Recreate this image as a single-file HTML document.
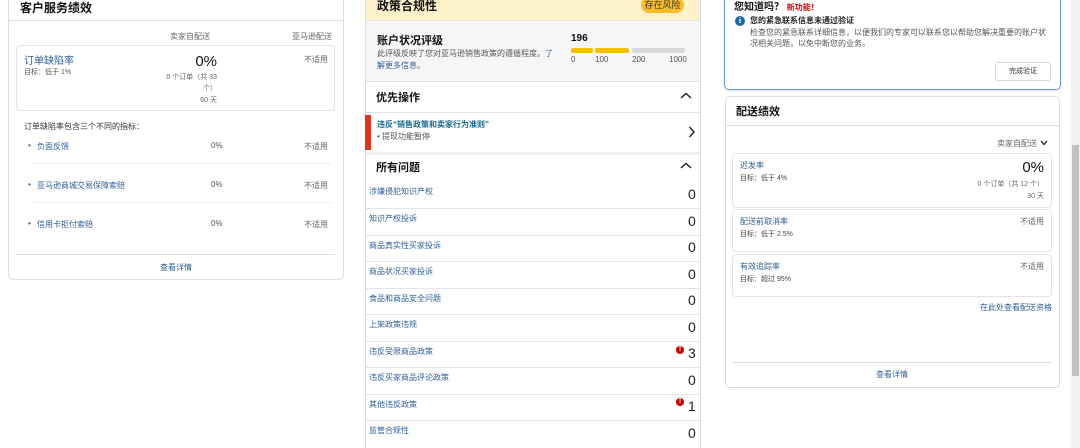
<!DOCTYPE html>
<html><head><meta charset="utf-8"><style>
*{margin:0;padding:0;box-sizing:border-box}
html,body{width:1080px;height:448px;overflow:hidden}
body{background:#fff;font-family:"Liberation Sans","Noto Sans CJK SC",sans-serif;color:#333;position:relative}
.a{position:absolute;white-space:nowrap}
.s{font-size:8px;color:#555}
.t{font-size:8px;color:#666}
.l{color:#2f5f97}
.h{font-size:12px;font-weight:bold;color:#111}
.r{text-align:right}
.box{position:absolute;border:1px solid #e3e3e3;border-radius:4px}
.ln{position:absolute;height:1px;background:#e3e3e3}
.num{font-size:14px;color:#222;line-height:16px}
.ex{position:absolute;width:8px;height:8px;border-radius:50%;background:#c40000;color:#fff;font-size:7px;font-weight:bold;text-align:center;line-height:8px}
</style></head><body>

<!-- left card -->
<div class="box" style="left:8px;top:-6px;width:336px;height:286px;border-radius:6px;border-color:#dcdcdc"></div>
<div class="ln" style="left:8px;top:20px;width:336px;background:#dde0e0"></div>
<div class="a h" style="left:20px;top:-1px;font-size:12px">客户服务绩效</div>
<div class="a t" style="left:170px;top:31px;width:47px" >卖家自配送</div>
<div class="a t" style="left:292px;top:31px">亚马逊配送</div>
<div class="box" style="left:16px;top:45px;width:319px;height:66px"></div>
<div class="a l" style="left:24px;top:52px;font-size:10px">订单缺陷率</div>
<div class="a s" style="left:24px;top:67px;font-size:7px">目标：低于 1%</div>
<div class="a" style="left:170px;top:53px;width:47px;font-size:15px;text-align:right;color:#111">0%</div>
<div class="a t r" style="left:140px;top:72px;width:77px;font-size:7px">0 个订单（共 33</div>
<div class="a t r" style="left:140px;top:83px;width:77px;font-size:7px">个）</div>
<div class="a t r" style="left:140px;top:95px;width:77px;font-size:7px">60 天</div>
<div class="a t" style="left:304px;top:54px">不适用</div>
<div class="a" style="left:24px;top:121px;font-size:8px;color:#333">订单缺陷率包含三个不同的指标：</div>
<div class="a s" style="left:28px;top:141px">•</div><div class="a s l" style="left:37px;top:141px">负面反馈</div><div class="a s" style="left:211px;top:141px">0%</div><div class="a t" style="left:304px;top:141px">不适用</div>
<div class="ln" style="left:34px;top:163px;width:297px;background:#eee"></div>
<div class="a s" style="left:28px;top:180px">•</div><div class="a s l" style="left:37px;top:180px">亚马逊商城交易保障索赔</div><div class="a s" style="left:211px;top:180px">0%</div><div class="a t" style="left:304px;top:180px">不适用</div>
<div class="ln" style="left:34px;top:202px;width:297px;background:#eee"></div>
<div class="a s" style="left:28px;top:219px">•</div><div class="a s l" style="left:37px;top:219px">信用卡拒付索赔</div><div class="a s" style="left:211px;top:219px">0%</div><div class="a t" style="left:304px;top:219px">不适用</div>
<div class="ln" style="left:16px;top:254px;width:319px;background:#dde0e0"></div>
<div class="a s l" style="left:160px;top:262px">查看详情</div>

<!-- middle card -->
<div style="position:absolute;left:365px;top:0;width:336px;height:448px;border-left:1px solid #dcdcdc;border-right:1px solid #dcdcdc;background:#fff"></div>
<div style="position:absolute;left:366px;top:0;width:334px;height:20px;background:#fcf1c8"></div>
<div class="a h" style="left:377px;top:-3px;font-size:12px">政策合规性</div>
<div class="a" style="left:641px;top:-3px;width:43px;height:16px;border-radius:8px;background:#f7be2a;font-size:9px;text-align:center;line-height:16px;color:#333">存在风险</div>
<div style="position:absolute;left:366px;top:20px;width:334px;height:62px;background:#f6f6f6;border-top:1px solid #e4e4e4;border-bottom:1px solid #e4e4e4"></div>
<div class="a h" style="left:377px;top:32px;font-size:11px">账户状况评级</div>
<div class="a s" style="left:377px;top:48px">此评级反映了您对亚马逊销售政策的遵循程度。<span class="l">了</span></div>
<div class="a s l" style="left:377px;top:60px">解更多信息。</div>
<div class="a" style="left:571px;top:33px;font-size:10px;font-weight:bold;color:#111">196</div>
<div style="position:absolute;left:571px;top:48px;width:22px;height:5px;background:#f7be00;border-radius:2px"></div>
<div style="position:absolute;left:595px;top:48px;width:34px;height:5px;background:#f7be00;border-radius:2px"></div>
<div style="position:absolute;left:632px;top:48px;width:53px;height:5px;background:#d5d9d9;border-radius:2px"></div>
<div class="a s" style="left:571px;top:55px">0</div><div class="a s" style="left:595px;top:55px">100</div><div class="a s" style="left:632px;top:55px">200</div><div class="a s" style="left:669px;top:55px">1000</div>
<div class="a h" style="left:376px;top:89px;font-size:11px">优先操作</div>
<svg class="a" style="left:680px;top:92px" width="12" height="8"><path d="M1 6 L6 1.5 L11 6" fill="none" stroke="#222" stroke-width="1.4"/></svg>
<div class="ln" style="left:366px;top:112px;width:334px"></div>
<div style="position:absolute;left:365px;top:115px;width:6px;height:35px;background:#e3311b"></div>
<div class="a" style="left:377px;top:119px;font-size:8px;color:#1b6b8c;font-weight:bold">违反“销售政策和卖家行为准则”</div>
<div class="a s" style="left:377px;top:131px">• 提现功能暂停</div>
<svg class="a" style="left:688px;top:126px" width="8" height="12"><path d="M1.5 1 L6 6 L1.5 11" fill="none" stroke="#222" stroke-width="1.4"/></svg>
<div style="position:absolute;left:366px;top:152px;width:334px;height:3px;background:#f0f0f0"></div>
<div class="a h" style="left:376px;top:159px;font-size:11px">所有问题</div>
<svg class="a" style="left:680px;top:162px" width="12" height="8"><path d="M1 6 L6 1.5 L11 6" fill="none" stroke="#222" stroke-width="1.4"/></svg>

<div class="a s l" style="left:369px;top:186px">涉嫌侵犯知识产权</div><div class="a num" style="left:688px;top:186px">0</div>
<div class="ln" style="left:366px;top:208px;width:334px"></div>
<div class="a s l" style="left:369px;top:213px">知识产权投诉</div><div class="a num" style="left:688px;top:213px">0</div>
<div class="ln" style="left:366px;top:235px;width:334px"></div>
<div class="a s l" style="left:369px;top:240px">商品真实性买家投诉</div><div class="a num" style="left:688px;top:239px">0</div>
<div class="ln" style="left:366px;top:261px;width:334px"></div>
<div class="a s l" style="left:369px;top:266px">商品状况买家投诉</div><div class="a num" style="left:688px;top:266px">0</div>
<div class="ln" style="left:366px;top:288px;width:334px"></div>
<div class="a s l" style="left:369px;top:293px">食品和商品安全问题</div><div class="a num" style="left:688px;top:292px">0</div>
<div class="ln" style="left:366px;top:314px;width:334px"></div>
<div class="a s l" style="left:369px;top:319px">上架政策违规</div><div class="a num" style="left:688px;top:319px">0</div>
<div class="ln" style="left:366px;top:341px;width:334px"></div>
<div class="a s l" style="left:369px;top:346px">违反受限商品政策</div><div class="ex" style="left:676px;top:346px">!</div><div class="a num" style="left:688px;top:345px">3</div>
<div class="ln" style="left:366px;top:367px;width:334px"></div>
<div class="a s l" style="left:369px;top:372px">违反买家商品评论政策</div><div class="a num" style="left:688px;top:372px">0</div>
<div class="ln" style="left:366px;top:394px;width:334px"></div>
<div class="a s l" style="left:369px;top:399px">其他违反政策</div><div class="ex" style="left:676px;top:398px">!</div><div class="a num" style="left:688px;top:398px">1</div>
<div class="ln" style="left:366px;top:420px;width:334px"></div>
<div class="a s l" style="left:369px;top:425px">监管合规性</div><div class="a num" style="left:688px;top:425px">0</div>

<!-- right top card -->
<div style="position:absolute;left:724px;top:-8px;width:337px;height:98px;border:1px solid #6b9bd0;border-radius:5px;box-shadow:0 1px 2px rgba(0,0,0,.12)"></div>
<div class="a h" style="left:734px;top:-2px;font-size:10px">您知道吗？ <span style="color:#d00;font-size:8px">新功能！</span></div>
<div class="a" style="left:735px;top:16px;width:10px;height:10px;border-radius:50%;background:#1d67b0;color:#fff;font-size:8px;font-weight:bold;text-align:center;line-height:10px;font-family:'Liberation Serif',serif">i</div>
<div class="a" style="left:750px;top:15px;font-size:8px;font-weight:bold;color:#222">您的紧急联系信息未通过验证</div>
<div class="a s" style="left:750px;top:27px">检查您的紧急联系详细信息，以便我们的专家可以联系您以帮助您解决重要的账户状</div>
<div class="a s" style="left:750px;top:38px">况相关问题，以免中断您的业务。</div>
<div class="a" style="left:995px;top:62px;width:56px;height:19px;border:1px solid #d8d8d8;border-radius:3px;font-size:7px;text-align:center;line-height:17px;color:#333">完成验证</div>

<!-- right delivery card -->
<div class="box" style="left:725px;top:96px;width:335px;height:292px;border-radius:5px;border-color:#dcdcdc"></div>
<div class="ln" style="left:725px;top:125px;width:335px;background:#dcdcdc"></div>
<div class="a h" style="left:736px;top:103px;font-size:11px">配送绩效</div>
<div class="a t" style="left:997px;top:138px">卖家自配送</div>
<svg class="a" style="left:1040px;top:140px" width="8" height="6"><path d="M1 1 L4 4.5 L7 1" fill="none" stroke="#222" stroke-width="1.3"/></svg>
<div class="box" style="left:732px;top:153px;width:320px;height:55px"></div>
<div class="a s l" style="left:740px;top:160px">迟发率</div>
<div class="a s" style="left:740px;top:173px;font-size:7px;color:#444">目标：低于 4%</div>
<div class="a r" style="left:980px;top:159px;width:64px;font-size:15px;color:#111">0%</div>
<div class="a t r" style="left:940px;top:179px;width:104px;font-size:7px">0 个订单（共 12 个）</div>
<div class="a t r" style="left:940px;top:191px;width:104px;font-size:7px">30 天</div>
<div class="box" style="left:732px;top:209px;width:320px;height:43px"></div>
<div class="a s l" style="left:740px;top:216px">配送前取消率</div>
<div class="a s" style="left:740px;top:229px;font-size:7px;color:#444">目标：低于 2.5%</div>
<div class="a t r" style="left:990px;top:216px;width:54px">不适用</div>
<div class="box" style="left:732px;top:254px;width:320px;height:43px"></div>
<div class="a s l" style="left:740px;top:261px">有效追踪率</div>
<div class="a s" style="left:740px;top:274px;font-size:7px;color:#444">目标：超过 95%</div>
<div class="a t r" style="left:990px;top:261px;width:54px">不适用</div>
<div class="a s l r" style="left:960px;top:302px;width:92px">在此处查看配送资格</div>
<div class="ln" style="left:732px;top:362px;width:320px;background:#dcdcdc"></div>
<div class="a s l" style="left:876px;top:369px">查看详情</div>

<!-- scrollbar -->
<div style="position:absolute;left:1071px;top:0;width:9px;height:448px;background:#f1f1f1"></div>
<div style="position:absolute;left:1072px;top:145px;width:7px;height:231px;background:#c1c1c1"></div>
</body></html>
